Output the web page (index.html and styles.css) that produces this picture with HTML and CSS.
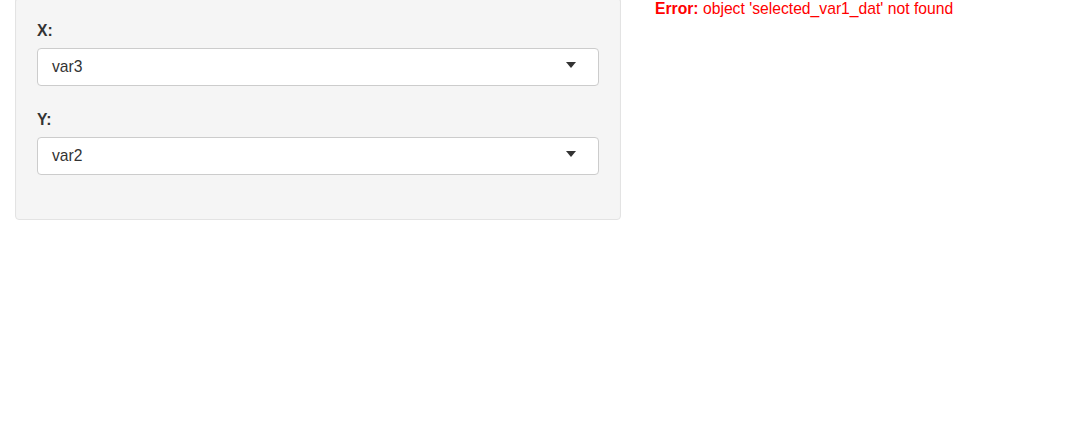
FILE: index.html
```html
<!DOCTYPE html>
<html>
<head>
<meta charset="utf-8">
<link rel="stylesheet" href="styles.css">
</head>
<body>
<div class="page">
  <div class="sidebar">
    <div class="well">
      <div class="form-group">
        <label class="control-label">X:</label>
        <div class="select">
          <span class="select-value">var3</span>
          <span class="caret"></span>
        </div>
      </div>
      <div class="form-group">
        <label class="control-label">Y:</label>
        <div class="select">
          <span class="select-value">var2</span>
          <span class="caret"></span>
        </div>
      </div>
    </div>
  </div>
  <div class="main">
    <div class="output-error"><strong>Error:</strong> object 'selected_var1_dat' not found</div>
  </div>
</div>
</body>
</html>
```
FILE: styles.css
```css
html, body {
  margin: 0;
  padding: 0;
  background: #ffffff;
}

body {
  font-family: "Liberation Sans", Arial, Helvetica, sans-serif;
  font-size: 15.7px;
  line-height: 22px;
  color: #333333;
}

.page {
  display: flex;
  align-items: flex-start;
  margin-top: -3px;
  padding-left: 15px;
}

.sidebar {
  width: 606px;
  flex: 0 0 606px;
}

.well {
  box-sizing: border-box;
  background: #f5f5f5;
  border: 1px solid #e3e3e3;
  border-radius: 4px;
  box-shadow: inset 0 1px 1px rgba(0, 0, 0, 0.05);
  padding: 22px 21px 21px 21px;
}

.form-group {
  display: flex;
  flex-direction: column;
  margin-bottom: 23px;
}

.control-label {
  font-weight: bold;
  line-height: 22px;
  margin-bottom: 6px;
}

.select {
  box-sizing: border-box;
  height: 38px;
  display: flex;
  align-items: center;
  justify-content: space-between;
  background: #ffffff;
  border: 1px solid #cccccc;
  border-radius: 4px;
  padding: 0 22px 0 14px;
  color: #333333;
}

.caret {
  width: 0;
  height: 0;
  border-left: 5.5px solid transparent;
  border-right: 5.5px solid transparent;
  border-top: 6px solid #333333;
  margin-top: -4px;
}

.main {
  margin-left: 34px;
  flex: 1 1 auto;
}

.output-error {
  color: #ff0000;
  margin-top: 1px;
}
```
